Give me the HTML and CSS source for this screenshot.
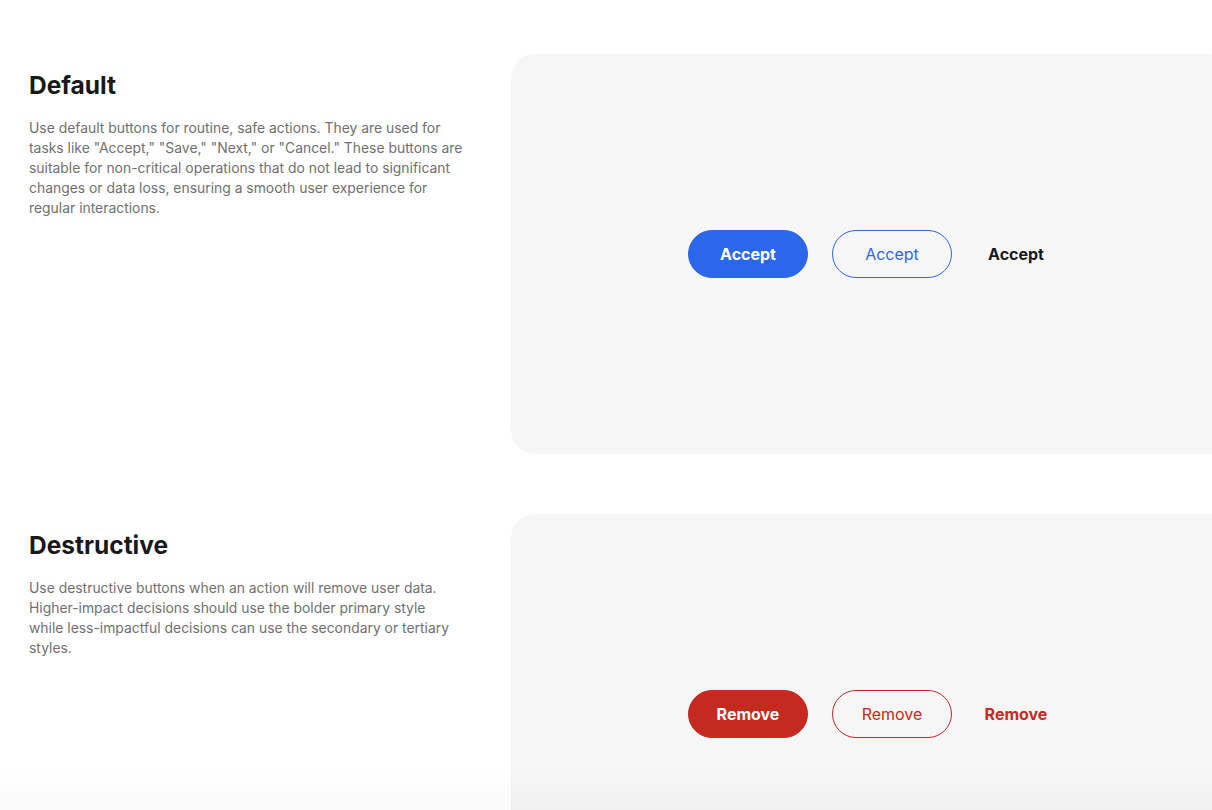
FILE: index.html
```html
<!DOCTYPE html>
<html lang="en">
<head>
<meta charset="utf-8">
<title>Buttons</title>
<link rel="stylesheet" href="styles.css">
</head>
<body>
<main class="page">
  <section class="row">
    <div class="info">
      <h2 class="title">Default</h2>
      <p class="desc desc-wide">Use default buttons for routine, safe actions. They are used for tasks like "Accept," "Save," "Next," or "Cancel." These buttons are suitable for non-critical operations that do not lead to significant changes or data loss, ensuring a smooth user experience for regular interactions.</p>
    </div>
    <div class="panel">
      <button class="btn btn-primary">Accept</button>
      <button class="btn btn-secondary">Accept</button>
      <button class="btn btn-tertiary">Accept</button>
    </div>
  </section>
  <section class="row">
    <div class="info">
      <h2 class="title">Destructive</h2>
      <p class="desc desc-narrow">Use destructive buttons when an action will remove user data. Higher-impact decisions should use the bolder primary style while less-impactful decisions can use the secondary or tertiary styles.</p>
    </div>
    <div class="panel">
      <button class="btn btn-primary danger">Remove</button>
      <button class="btn btn-secondary danger">Remove</button>
      <button class="btn btn-tertiary danger">Remove</button>
    </div>
  </section>
</main>
<div class="fade"></div>
</body>
</html>
```

FILE: styles.css
```css
html, body {
  margin: 0;
  padding: 0;
  background: #ffffff;
  overflow: hidden;
  height: 810px;
}

body {
  font-family: "Inter", "Liberation Sans", sans-serif;
  color: #191919;
}

.page {
  display: flex;
  flex-direction: column;
  gap: 60px;
  padding-top: 54px;
  width: 1240px;
}

.row {
  display: grid;
  grid-template-columns: 511px 722px;
}

.info {
  padding: 16px 0 0 29px;
}

.title {
  margin: 0;
  font-size: 24.5px;
  line-height: 30px;
  font-weight: 700;
  letter-spacing: 0;
  color: #191919;
}

.desc {
  margin: 18px 0 0;
  font-size: 13.9px;
  line-height: 20px;
  color: #707070;
  letter-spacing: 0;
}

.desc-wide {
  width: 440px;
}

.desc-narrow {
  width: 428px;
}

.panel {
  height: 400px;
  background: #f6f6f6;
  border-radius: 24px;
  display: flex;
  align-items: center;
  justify-content: center;
  gap: 24px;
}

.btn {
  font-family: "Inter", "Liberation Sans", sans-serif;
  font-size: 16px;
  height: 48px;
  border-radius: 24px;
  border: 1px solid transparent;
  background: transparent;
  cursor: pointer;
  padding: 0;
}

.btn-primary {
  width: 120px;
  background: #2b67ea;
  border-color: #2b67ea;
  color: #ffffff;
  font-weight: 700;
}

.btn-secondary {
  width: 120px;
  background: transparent;
  border-color: #2b67ea;
  color: #2b67ea;
  font-weight: 400;
}

.btn-tertiary {
  width: 80px;
  color: #191919;
  font-weight: 700;
}

.btn-primary.danger {
  background: #c42a20;
  border-color: #c42a20;
  color: #ffffff;
}

.btn-secondary.danger {
  border-color: #c42a20;
  color: #c42a20;
}

.btn-tertiary.danger {
  color: #c42a20;
}

.fade {
  position: fixed;
  left: 0;
  right: 0;
  bottom: 0;
  height: 40px;
  background: linear-gradient(to bottom, rgba(0,0,0,0), rgba(0,0,0,0.02));
  pointer-events: none;
}
```
